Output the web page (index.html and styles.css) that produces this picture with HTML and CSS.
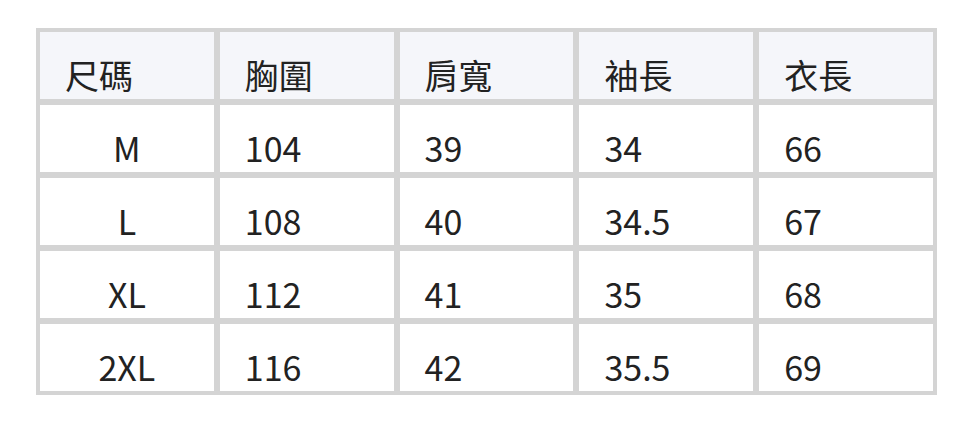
FILE: index.html
```html
<!DOCTYPE html>
<html lang="zh-Hant">
<head>
<meta charset="utf-8">
<title>尺碼表</title>
<link rel="stylesheet" href="styles.css">
</head>
<body>
<table class="size-table">
  <thead>
    <tr>
      <th>尺碼</th>
      <th>胸圍</th>
      <th>肩寬</th>
      <th>袖長</th>
      <th>衣長</th>
    </tr>
  </thead>
  <tbody>
    <tr><td class="size">M</td><td>104</td><td>39</td><td>34</td><td>66</td></tr>
    <tr><td class="size">L</td><td>108</td><td>40</td><td>34.5</td><td>67</td></tr>
    <tr><td class="size">XL</td><td>112</td><td>41</td><td>35</td><td>68</td></tr>
    <tr><td class="size">2XL</td><td>116</td><td>42</td><td>35.5</td><td>69</td></tr>
  </tbody>
</table>
</body>
</html>
```
FILE: styles.css
```css
html, body {
  margin: 0;
  padding: 0;
  background: #ffffff;
}

body {
  padding: 28px 0 0 36px;
  font-family: "Noto Sans CJK TC", "Noto Sans CJK SC", "Noto Sans", sans-serif;
  color: #222222;
}

.size-table {
  width: 901px;
  table-layout: fixed;
  border-collapse: separate;
  border-spacing: 2px;
  background: #d4d4d4;
}

.size-table th,
.size-table td {
  box-sizing: border-box;
  height: 71px;
  border: 2px solid #d4d4d4;
  padding: 0 0 7px 25px;
  font-size: 34px;
  line-height: 34px;
  font-weight: 400;
  text-align: left;
  vertical-align: bottom;
  white-space: nowrap;
}

.size-table th {
  background: #f5f6fa;
}

.size-table td {
  background: #ffffff;
}

.size-table td.size {
  text-align: center;
  padding-left: 0;
}
```
